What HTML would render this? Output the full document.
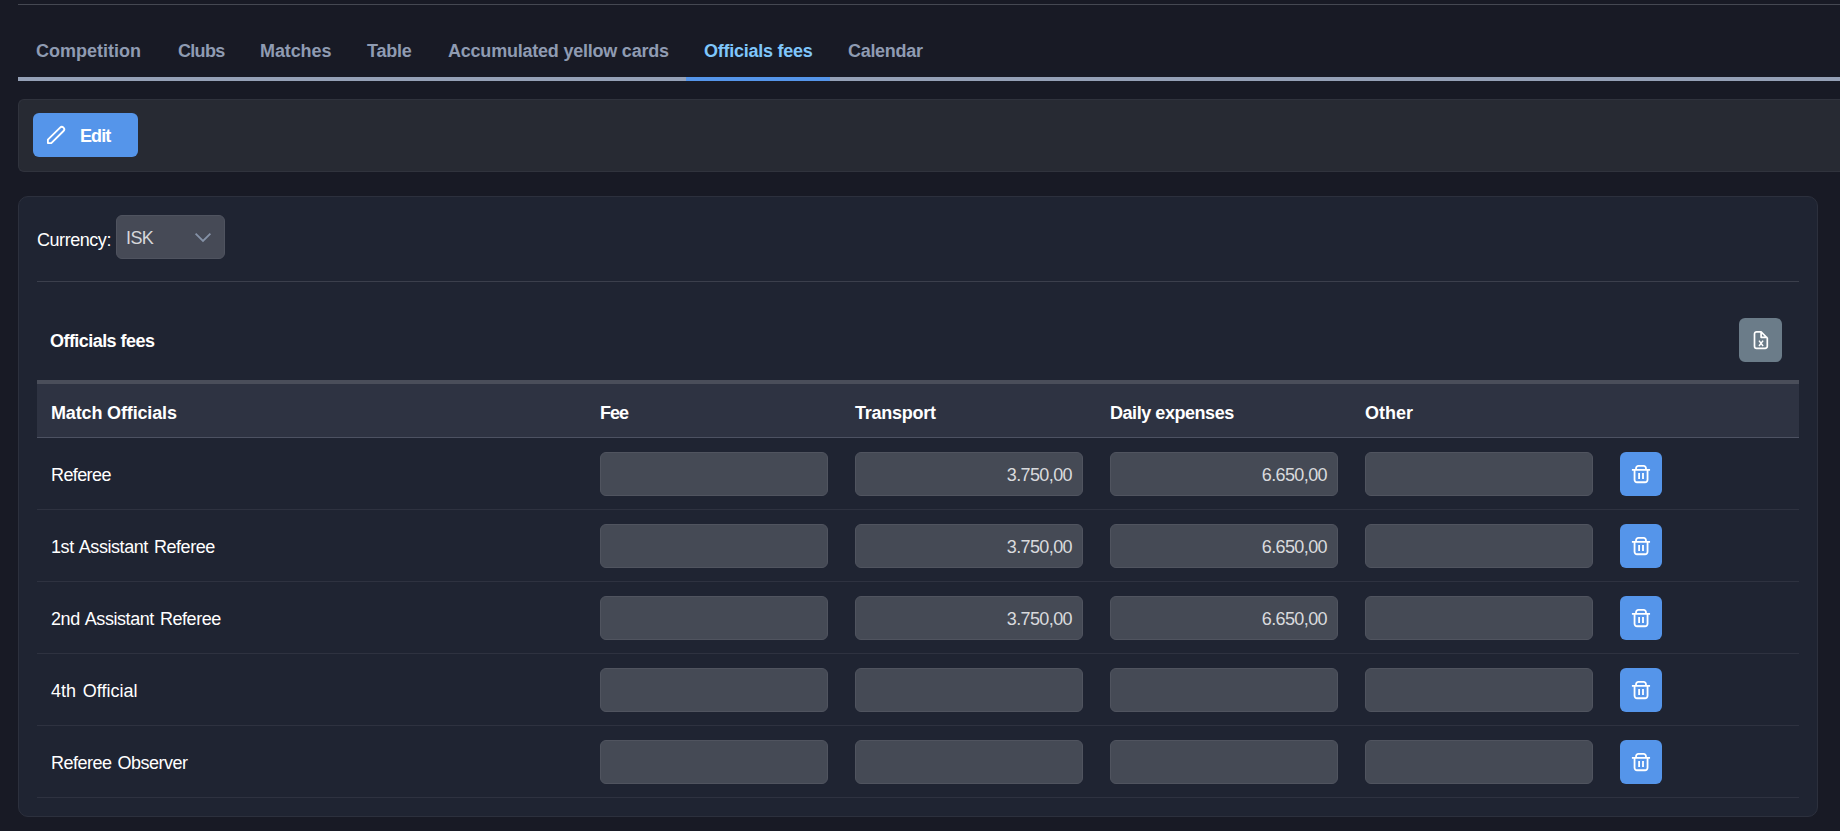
<!DOCTYPE html>
<html><head><meta charset="utf-8">
<style>
*{box-sizing:border-box;margin:0;padding:0}
html,body{width:1840px;height:831px;overflow:hidden;background:#181a25;font-family:"Liberation Sans",sans-serif;color:#e6e8ec}
.abs{position:absolute}
.topline{left:18px;top:4px;width:1822px;height:1px;background:#454852}
.tabline{left:18px;top:77px;width:1822px;height:4px;background:#95a1b7}
.tabact{left:686px;top:77px;width:144px;height:4px;background:#5595ea}
.tab{top:41px;font-size:18px;font-weight:700;color:#8f9bb2;white-space:nowrap;line-height:20px}
.tab.on{color:#7fc6fb}
.panel1{left:18px;top:99px;width:1840px;height:73px;background:#272a33;border:1px solid #30333d;border-right:none;border-radius:6px 0 0 6px}
.editbtn{left:33px;top:113px;width:105px;height:44px;background:#5595ea;border-radius:6px}
.edittxt{left:80px;letter-spacing:-0.9px;top:126px;font-size:18px;font-weight:700;color:#fff;line-height:20px}
.panel2{left:18px;top:196px;width:1800px;height:621px;background:#1f2432;border:1px solid #2c303d;border-radius:10px}
.lbl{font-size:18px;line-height:20px;white-space:nowrap;color:#fff}
.select{left:116px;top:215px;width:109px;height:44px;background:#464a56;border:1px solid #4f535f;border-radius:6px}
.hr{left:37px;top:281px;width:1762px;height:1px;background:#3b3f4c}
.xbtn{left:1739px;top:318px;width:43px;height:44px;background:#6b7c89;border-radius:6px}
.thtop{left:37px;top:380px;width:1762px;height:4px;background:#4a4e5a}
.thbg{left:37px;top:384px;width:1762px;height:53px;background:#2e3342}
.thbot{left:37px;top:437px;width:1762px;height:1px;background:#4d5262}
.th{font-size:18px;font-weight:700;color:#fff;line-height:20px;white-space:nowrap}
.rowline{left:37px;width:1762px;height:1px;background:#2e3240}
.inp{width:228px;height:44px;background:#454a55;border:1px solid #50545f;border-radius:6px}
.val{font-size:18px;letter-spacing:-0.6px;color:#d9dadd;line-height:20px;white-space:nowrap;text-align:right}
.del{left:1620px;width:42px;height:44px;background:#5595ea;border-radius:6px}
</style></head><body>
<div class="abs topline"></div>
<div class="abs tab" style="left:36px">Competition</div>
<div class="abs tab" style="left:178px;letter-spacing:-0.7px">Clubs</div>
<div class="abs tab" style="left:260px;letter-spacing:-0.1px">Matches</div>
<div class="abs tab" style="left:367px;letter-spacing:-0.2px">Table</div>
<div class="abs tab" style="left:448px;letter-spacing:-0.22px">Accumulated yellow cards</div>
<div class="abs tab on" style="left:704px;letter-spacing:-0.25px">Officials fees</div>
<div class="abs tab" style="left:848px;letter-spacing:-0.3px">Calendar</div>
<div class="abs tabline"></div>
<div class="abs tabact"></div>

<div class="abs panel1"></div>
<div class="abs editbtn"></div>
<svg class="abs" style="left:46px;top:125px" width="20" height="20" viewBox="0 0 20 20"><path d="M1.9 18.1 V14.7 L14.1 2.6 A2.4 2.4 0 0 1 17.5 6.0 L5.3 18.1 Z" fill="none" stroke="#fff" stroke-width="1.85" stroke-linejoin="round"/></svg>
<div class="abs edittxt">Edit</div>

<div class="abs panel2"></div>
<div class="abs lbl" style="left:37px;top:230px;letter-spacing:-0.45px">Currency:</div>
<div class="abs select"></div>
<div class="abs lbl" style="left:126px;top:228px;color:#d6d7da;letter-spacing:-0.6px">ISK</div>
<svg class="abs" style="left:194px;top:231px" width="18" height="12" viewBox="0 0 18 12"><path d="M1.6 2.6 L9 10 L16.4 2.6" fill="none" stroke="#8592a7" stroke-width="1.8"/></svg>
<div class="abs hr"></div>

<div class="abs th" style="left:50px;top:331px;letter-spacing:-0.55px">Officials fees</div>
<div class="abs xbtn"></div>
<svg class="abs" style="left:1751px;top:330px" width="20" height="20" viewBox="0 0 20 20"><path d="M5.6 1.8 H10.1 L16.3 8 V16.2 A2.1 2.1 0 0 1 14.2 18.3 H5.6 A2.1 2.1 0 0 1 3.5 16.2 V3.9 A2.1 2.1 0 0 1 5.6 1.8 Z M10.1 1.8 V7.3 H16.3" fill="none" stroke="#fff" stroke-width="1.7" stroke-linejoin="round"/><path d="M8 10.6 L12.1 16 M12.1 10.6 L8 16" fill="none" stroke="#fff" stroke-width="1.45"/></svg>

<div class="abs thtop"></div>
<div class="abs thbg"></div>
<div class="abs thbot"></div>
<div class="abs th" style="left:51px;top:403px;letter-spacing:-0.15px">Match Officials</div>
<div class="abs th" style="left:600px;top:403px;letter-spacing:-1px">Fee</div>
<div class="abs th" style="left:855px;top:403px;letter-spacing:-0.25px">Transport</div>
<div class="abs th" style="left:1110px;top:403px;letter-spacing:-0.45px">Daily expenses</div>
<div class="abs th" style="left:1365px;top:403px">Other</div>

<div id="rows"></div>
<!-- ROWS -->
<div class="abs lbl" style="left:51px;top:465px;letter-spacing:-0.6px;word-spacing:1.5px">Referee</div>
<div class="abs inp" style="left:600px;top:452px"></div>
<div class="abs inp" style="left:855px;top:452px"></div>
<div class="abs inp" style="left:1110px;top:452px"></div>
<div class="abs inp" style="left:1365px;top:452px"></div>
<div class="abs val" style="left:855px;width:217px;top:465px">3.750,00</div>
<div class="abs val" style="left:1110px;width:217px;top:465px">6.650,00</div>
<div class="abs del" style="top:452px"></div>
<svg class="abs" style="left:1631px;top:464px" width="20" height="20" viewBox="0 0 20 20"><path d="M0.9 5.9 H19.05 M5.05 5.9 V4.2 A2.25 2.25 0 0 1 7.3 1.95 H12.7 A2.25 2.25 0 0 1 14.95 4.2 V5.9 M3.55 5.9 V15.8 A2.45 2.45 0 0 0 6 18.25 H14.1 A2.45 2.45 0 0 0 16.55 15.8 V5.9 M8.1 9 V14.9 M12 9 V14.9" fill="none" stroke="#fff" stroke-width="1.8"/></svg>
<div class="abs rowline" style="top:509px"></div>
<div class="abs lbl" style="left:51px;top:537px;letter-spacing:-0.44px;word-spacing:1.5px">1st Assistant Referee</div>
<div class="abs inp" style="left:600px;top:524px"></div>
<div class="abs inp" style="left:855px;top:524px"></div>
<div class="abs inp" style="left:1110px;top:524px"></div>
<div class="abs inp" style="left:1365px;top:524px"></div>
<div class="abs val" style="left:855px;width:217px;top:537px">3.750,00</div>
<div class="abs val" style="left:1110px;width:217px;top:537px">6.650,00</div>
<div class="abs del" style="top:524px"></div>
<svg class="abs" style="left:1631px;top:536px" width="20" height="20" viewBox="0 0 20 20"><path d="M0.9 5.9 H19.05 M5.05 5.9 V4.2 A2.25 2.25 0 0 1 7.3 1.95 H12.7 A2.25 2.25 0 0 1 14.95 4.2 V5.9 M3.55 5.9 V15.8 A2.45 2.45 0 0 0 6 18.25 H14.1 A2.45 2.45 0 0 0 16.55 15.8 V5.9 M8.1 9 V14.9 M12 9 V14.9" fill="none" stroke="#fff" stroke-width="1.8"/></svg>
<div class="abs rowline" style="top:581px"></div>
<div class="abs lbl" style="left:51px;top:609px;letter-spacing:-0.44px;word-spacing:1.5px">2nd Assistant Referee</div>
<div class="abs inp" style="left:600px;top:596px"></div>
<div class="abs inp" style="left:855px;top:596px"></div>
<div class="abs inp" style="left:1110px;top:596px"></div>
<div class="abs inp" style="left:1365px;top:596px"></div>
<div class="abs val" style="left:855px;width:217px;top:609px">3.750,00</div>
<div class="abs val" style="left:1110px;width:217px;top:609px">6.650,00</div>
<div class="abs del" style="top:596px"></div>
<svg class="abs" style="left:1631px;top:608px" width="20" height="20" viewBox="0 0 20 20"><path d="M0.9 5.9 H19.05 M5.05 5.9 V4.2 A2.25 2.25 0 0 1 7.3 1.95 H12.7 A2.25 2.25 0 0 1 14.95 4.2 V5.9 M3.55 5.9 V15.8 A2.45 2.45 0 0 0 6 18.25 H14.1 A2.45 2.45 0 0 0 16.55 15.8 V5.9 M8.1 9 V14.9 M12 9 V14.9" fill="none" stroke="#fff" stroke-width="1.8"/></svg>
<div class="abs rowline" style="top:653px"></div>
<div class="abs lbl" style="left:51px;top:681px;letter-spacing:0.03px;word-spacing:1.5px">4th Official</div>
<div class="abs inp" style="left:600px;top:668px"></div>
<div class="abs inp" style="left:855px;top:668px"></div>
<div class="abs inp" style="left:1110px;top:668px"></div>
<div class="abs inp" style="left:1365px;top:668px"></div>
<div class="abs del" style="top:668px"></div>
<svg class="abs" style="left:1631px;top:680px" width="20" height="20" viewBox="0 0 20 20"><path d="M0.9 5.9 H19.05 M5.05 5.9 V4.2 A2.25 2.25 0 0 1 7.3 1.95 H12.7 A2.25 2.25 0 0 1 14.95 4.2 V5.9 M3.55 5.9 V15.8 A2.45 2.45 0 0 0 6 18.25 H14.1 A2.45 2.45 0 0 0 16.55 15.8 V5.9 M8.1 9 V14.9 M12 9 V14.9" fill="none" stroke="#fff" stroke-width="1.8"/></svg>
<div class="abs rowline" style="top:725px"></div>
<div class="abs lbl" style="left:51px;top:753px;letter-spacing:-0.51px;word-spacing:1.5px">Referee Observer</div>
<div class="abs inp" style="left:600px;top:740px"></div>
<div class="abs inp" style="left:855px;top:740px"></div>
<div class="abs inp" style="left:1110px;top:740px"></div>
<div class="abs inp" style="left:1365px;top:740px"></div>
<div class="abs del" style="top:740px"></div>
<svg class="abs" style="left:1631px;top:752px" width="20" height="20" viewBox="0 0 20 20"><path d="M0.9 5.9 H19.05 M5.05 5.9 V4.2 A2.25 2.25 0 0 1 7.3 1.95 H12.7 A2.25 2.25 0 0 1 14.95 4.2 V5.9 M3.55 5.9 V15.8 A2.45 2.45 0 0 0 6 18.25 H14.1 A2.45 2.45 0 0 0 16.55 15.8 V5.9 M8.1 9 V14.9 M12 9 V14.9" fill="none" stroke="#fff" stroke-width="1.8"/></svg>
<div class="abs rowline" style="top:797px"></div>
<!-- /ROWS -->
</body></html>
